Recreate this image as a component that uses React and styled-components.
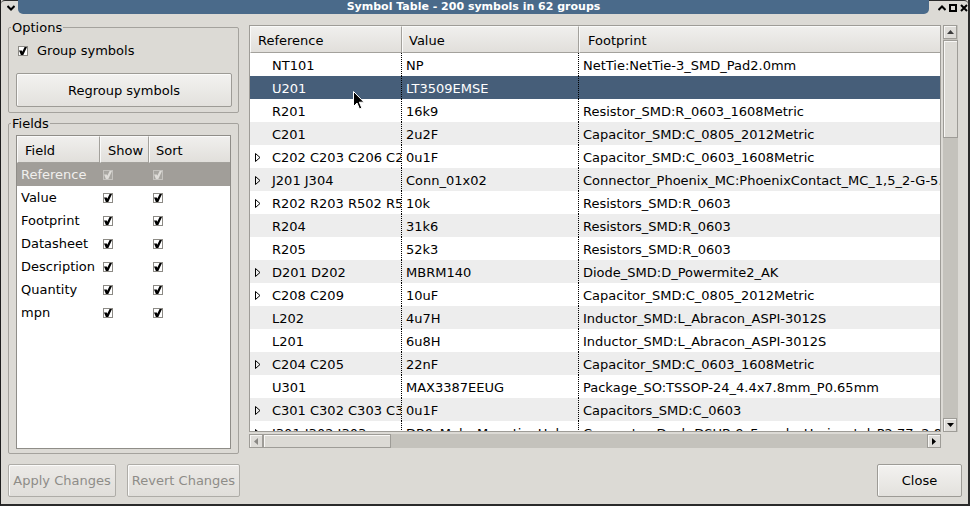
import styled, { createGlobalStyle } from "styled-components";

const GlobalStyle = createGlobalStyle`
  html, body {
    margin: 0;
    padding: 0;
    background: #dcdad5;
  }
  body {
    font-family: "DejaVu Sans", "Liberation Sans", sans-serif;
    font-size: 13px;
    color: #000;
  }
  * {
    box-sizing: border-box;
  }
`;

const fields = [
  "Reference",
  "Value",
  "Footprint",
  "Datasheet",
  "Description",
  "Quantity",
  "mpn",
];

const rows = [
  { ref: "NT101", value: "NP", fp: "NetTie:NetTie-3_SMD_Pad2.0mm" },
  { ref: "U201", value: "LT3509EMSE", fp: "", selected: true },
  { ref: "R201", value: "16k9", fp: "Resistor_SMD:R_0603_1608Metric" },
  { ref: "C201", value: "2u2F", fp: "Capacitor_SMD:C_0805_2012Metric" },
  { ref: "C202 C203 C206 C207", group: true, value: "0u1F", fp: "Capacitor_SMD:C_0603_1608Metric" },
  {
    ref: "J201 J304",
    group: true,
    value: "Conn_01x02",
    fp: "Connector_Phoenix_MC:PhoenixContact_MC_1,5_2-G-5.08_1x02_P5.08mm_Horizontal",
  },
  { ref: "R202 R203 R502 R503", group: true, value: "10k", fp: "Resistors_SMD:R_0603" },
  { ref: "R204", value: "31k6", fp: "Resistors_SMD:R_0603" },
  { ref: "R205", value: "52k3", fp: "Resistors_SMD:R_0603" },
  { ref: "D201 D202", group: true, value: "MBRM140", fp: "Diode_SMD:D_Powermite2_AK" },
  { ref: "C208 C209", group: true, value: "10uF", fp: "Capacitor_SMD:C_0805_2012Metric" },
  { ref: "L202", value: "4u7H", fp: "Inductor_SMD:L_Abracon_ASPI-3012S" },
  { ref: "L201", value: "6u8H", fp: "Inductor_SMD:L_Abracon_ASPI-3012S" },
  { ref: "C204 C205", group: true, value: "22nF", fp: "Capacitor_SMD:C_0603_1608Metric" },
  { ref: "U301", value: "MAX3387EEUG", fp: "Package_SO:TSSOP-24_4.4x7.8mm_P0.65mm" },
  { ref: "C301 C302 C303 C304", group: true, value: "0u1F", fp: "Capacitors_SMD:C_0603" },
  {
    ref: "J301 J302 J303",
    group: true,
    value: "DB9_Male_MountingHoles",
    fp: "Connector_Dsub:DSUB-9_Female_Horizontal_P2.77x2.84mm_EdgePinOffset9.90mm_Housed",
  },
];

function CheckMark({ dim }) {
  return (
    <CheckBox $dim={dim}>
      <svg width="8" height="8" viewBox="0 0 8 8">
        <path d="M0 3.4 L2.8 3.4 L3.3 4.7 L5.6 0 L8 0 L4.3 8 L1.9 8 Z" fill={dim ? "#dedcd8" : "#000"} />
      </svg>
    </CheckBox>
  );
}

function TreeArrow() {
  return (
    <svg width="6" height="9" viewBox="0 0 6 9">
      <path d="M0.5 0.5 L5 4.5 L0.5 8.5 Z" fill="none" stroke="#000" strokeWidth="1" />
    </svg>
  );
}

function App() {
  return (
    <>
      <GlobalStyle />
      <Window>
        <TitleBar>
          <MenuTab>
            <svg width="8" height="6" viewBox="0 0 8 6">
              <path d="M0.5 1 L4 4.5 L7.5 1" fill="none" stroke="#000" strokeWidth="2" />
            </svg>
          </MenuTab>
          <TitleStrip>Symbol Table - 200 symbols in 62 groups</TitleStrip>
          <WinControls>
            <svg width="8" height="6" viewBox="0 0 8 6">
              <path d="M0.5 5 L4 1.5 L7.5 5" fill="none" stroke="#000" strokeWidth="2" />
            </svg>
            <svg width="8" height="8" viewBox="0 0 8 8">
              <rect x="1" y="1" width="6" height="6" fill="none" stroke="#000" strokeWidth="2" />
            </svg>
            <svg width="8" height="8" viewBox="0 0 8 8">
              <path d="M1 1 L7 7 M7 1 L1 7" stroke="#000" strokeWidth="2" />
            </svg>
          </WinControls>
        </TitleBar>

        <Body>
          <Main>
            <LeftPane>
              <GroupBox $height="93px">
                <Legend>Options</Legend>
                <OptionsBody>
                  <CheckRow>
                    <CheckMark />
                    <span>Group symbols</span>
                  </CheckRow>
                  <Button $height="34px">Regroup symbols</Button>
                </OptionsBody>
              </GroupBox>

              <GroupBox $grow>
                <Legend>Fields</Legend>
                <FieldsBody>
                  <FieldsTable>
                    <FieldsHeader>
                      <HeaderCell $pad="7px">Field</HeaderCell>
                      <HeaderCell $pad="7px">Show</HeaderCell>
                      <HeaderCell $pad="6px" $last>Sort</HeaderCell>
                    </FieldsHeader>
                    {fields.map((name, i) => (
                      <FieldRow key={name} $selected={i === 0}>
                        <FieldCell>{name}</FieldCell>
                        <FieldCell $pad="3px">
                          <CheckMark dim={i === 0} />
                        </FieldCell>
                        <FieldCell $pad="4px">
                          <CheckMark dim={i === 0} />
                        </FieldCell>
                      </FieldRow>
                    ))}
                  </FieldsTable>
                </FieldsBody>
              </GroupBox>
            </LeftPane>

            <RightPane>
              <TableFrame>
                <TableHeader>
                  <HeaderCell $pad="7px">Reference</HeaderCell>
                  <HeaderCell $pad="6px">Value</HeaderCell>
                  <HeaderCell $pad="8px" $last>Footprint</HeaderCell>
                </TableHeader>
                {rows.map((r, i) => (
                  <DataRow key={r.ref} $alt={i % 2 === 1} $selected={r.selected}>
                    <RefCell>
                      <ArrowSlot>{r.group && <TreeArrow />}</ArrowSlot>
                      {r.ref}
                    </RefCell>
                    <DataCell $dotted>{r.value}</DataCell>
                    <DataCell>{r.fp}</DataCell>
                  </DataRow>
                ))}
                <Cursor width="12" height="19" viewBox="0 0 12 19">
                  <path
                    d="M0.5 0.5 L0.5 15.5 L4 12 L6.5 18 L8.8 17 L6.3 11.2 L11 11.2 Z"
                    fill="#000"
                    stroke="#fff"
                    strokeWidth="1"
                  />
                </Cursor>
              </TableFrame>

              <VScroll>
                <ScrollButton>
                  <svg width="7" height="4" viewBox="0 0 7 4">
                    <path d="M0 4 L3.5 0 L7 4 Z" fill="#3c3c3c" />
                  </svg>
                </ScrollButton>
                <VThumb />
                <Trough />
                <ScrollButton>
                  <svg width="7" height="4" viewBox="0 0 7 4">
                    <path d="M0 0 L3.5 4 L7 0 Z" fill="#000" />
                  </svg>
                </ScrollButton>
              </VScroll>

              <HScroll>
                <ScrollButton>
                  <svg width="4" height="7" viewBox="0 0 4 7">
                    <path d="M4 0 L0 3.5 L4 7 Z" fill="#8a8884" />
                  </svg>
                </ScrollButton>
                <HThumb />
                <Trough />
                <ScrollButton>
                  <svg width="4" height="7" viewBox="0 0 4 7">
                    <path d="M0 0 L4 3.5 L0 7 Z" fill="#000" />
                  </svg>
                </ScrollButton>
              </HScroll>
            </RightPane>
          </Main>

          <ButtonRow>
            <Button $width="108px" disabled>
              Apply Changes
            </Button>
            <Button $width="113px" disabled>
              Revert Changes
            </Button>
            <Spacer />
            <Button $width="85px">Close</Button>
          </ButtonRow>
        </Body>
      </Window>
    </>
  );
}

const Window = styled.div`
  width: 970px;
  height: 506px;
  display: flex;
  flex-direction: column;
  background: #dcdad5;
  border-left: 1px solid #1e1e1e;
  border-right: 2px solid #2a2a2a;
  border-bottom: 2px solid #2a2a2a;
  overflow: hidden;
`;

const TitleBar = styled.div`
  height: 15px;
  display: flex;
  flex-shrink: 0;
`;

const MenuTab = styled.div`
  width: 17px;
  display: flex;
  align-items: center;
  justify-content: center;
  padding-left: 3px;
  padding-bottom: 1px;
  border-top: 1px solid #2b2b2b;
  border-top-left-radius: 4px;
`;

const TitleStrip = styled.div`
  flex: 1;
  height: 14px;
  background: #4a6a8a;
  border-radius: 0 0 5px 5px;
  color: #fff;
  font-weight: bold;
  font-size: 11px;
  line-height: 14px;
  text-align: center;
`;

const WinControls = styled.div`
  width: 39px;
  display: flex;
  align-items: center;
  gap: 3px;
  padding-left: 9px;
  padding-bottom: 1px;
  border-top: 1px solid #2b2b2b;
  border-top-right-radius: 4px;
`;

const Body = styled.div`
  flex: 1;
  display: flex;
  flex-direction: column;
  padding: 5px 6px 7px 7px;
`;

const Main = styled.div`
  height: 434px;
  display: flex;
  gap: 10px;
`;

const LeftPane = styled.div`
  width: 231px;
  display: flex;
  flex-direction: column;
  gap: 3px;
`;

const GroupBox = styled.fieldset`
  margin: 0;
  padding: 0;
  min-width: 0;
  border: 1px solid #a4a29d;
  border-radius: 2px;
  display: flex;
  flex-direction: column;
  height: ${(p) => p.$height || "auto"};
  flex: ${(p) => (p.$grow ? "1" : "none")};
`;

const Legend = styled.legend`
  margin-left: 2px;
  padding: 0 1px;
  line-height: 15px;
  font-size: 13px;
`;

const OptionsBody = styled.div`
  display: flex;
  flex-direction: column;
  gap: 15px;
  padding: 8px 6px 0 7px;
`;

const CheckRow = styled.div`
  height: 15px;
  display: flex;
  align-items: center;
  gap: 9px;
  padding-left: 2px;
`;

const CheckBox = styled.span`
  width: 10px;
  height: 10px;
  display: inline-flex;
  align-items: center;
  justify-content: center;
  border: 1px solid ${(p) => (p.$dim ? "#c4c2be" : "#8c8a85")};
  background: ${(p) => (p.$dim ? "#a8a6a1" : "#fff")};
  flex-shrink: 0;
`;

const Button = styled.button`
  width: ${(p) => p.$width || "100%"};
  height: ${(p) => p.$height || "33px"};
  font-family: "DejaVu Sans", "Liberation Sans", sans-serif;
  font-size: 13px;
  color: #000;
  background: linear-gradient(#f3f2f0, #e3e1dd);
  border: 1px solid #9d9b96;
  border-radius: 2px;
  box-shadow: inset 1px 1px 0 #fbfbfa;
  padding: 0;

  &:disabled {
    color: #8e8c88;
    background: linear-gradient(#eceae7, #e0deda);
    border-color: #aeaca7;
  }
`;

const FieldsBody = styled.div`
  flex: 1;
  min-height: 0;
  display: flex;
  padding: 4px 7px 4px 7px;
`;

const FieldsTable = styled.div`
  flex: 1;
  background: #fff;
  border: 1px solid #8f8d88;
`;

const FieldsHeader = styled.div`
  display: grid;
  grid-template-columns: 83px 49px 1fr;
  height: 27px;
`;

const HeaderCell = styled.div`
  display: flex;
  align-items: center;
  padding-left: ${(p) => p.$pad};
  padding-top: 1px;
  background: linear-gradient(#f0efed, #e1dfdb);
  border-top: 1px solid #fafaf9;
  border-left: 1px solid #fafaf9;
  border-bottom: 1px solid #a3a19c;
  border-right: ${(p) => (p.$last ? "none" : "1px solid #a3a19c")};
  white-space: nowrap;
  overflow: hidden;
`;

const FieldRow = styled.div`
  display: grid;
  grid-template-columns: 83px 49px 1fr;
  height: 23px;
  background: ${(p) => (p.$selected ? "#a19e99" : "#fff")};
  color: ${(p) => (p.$selected ? "#f0efed" : "#000")};
`;

const FieldCell = styled.div`
  display: flex;
  align-items: center;
  padding-left: ${(p) => p.$pad || "4px"};
  white-space: nowrap;
`;

const RightPane = styled.div`
  margin-top: 5px;
  display: grid;
  grid-template-columns: 692px 15px;
  grid-template-rows: 407px 14px;
  column-gap: 2px;
  row-gap: 2px;
`;

const TableFrame = styled.div`
  position: relative;
  border: 1px solid #9e9c97;
  background: #fff;
  overflow: hidden;
`;

const TableHeader = styled.div`
  display: grid;
  grid-template-columns: 152px 177px 1fr;
  height: 27px;
`;

const DataRow = styled.div`
  display: grid;
  grid-template-columns: 152px 177px 1fr;
  height: 23px;
  background: ${(p) => (p.$selected ? "#465e79" : p.$alt ? "#ededed" : "#fff")};
  color: ${(p) => (p.$selected ? "#fff" : "#000")};
`;

const DataCell = styled.div`
  display: flex;
  align-items: center;
  padding-left: 4px;
  padding-top: 1px;
  white-space: nowrap;
  overflow: hidden;
  border-right: ${(p) => (p.$dotted ? "1px dotted #000" : "none")};
`;

const RefCell = styled(DataCell).attrs({ $dotted: true })`
  padding-left: 5px;
`;

const ArrowSlot = styled.span`
  width: 17px;
  flex-shrink: 0;
  display: inline-flex;
  align-items: center;
`;

const Cursor = styled.svg`
  position: absolute;
  left: 103px;
  top: 65px;
`;

const VScroll = styled.div`
  display: flex;
  flex-direction: column;
  background: #c4c2bc;
`;

const HScroll = styled.div`
  display: flex;
  background: #c4c2bc;
`;

const ScrollButton = styled.div`
  width: 14px;
  height: 14px;
  flex-shrink: 0;
  display: flex;
  align-items: center;
  justify-content: center;
  background: #dedcd8;
  border: 1px solid #9e9c97;
  box-shadow: inset 1px 1px 0 #f6f5f3;
`;

const VThumb = styled.div`
  height: 98px;
  margin-top: 1px;
  background: #dcdad5;
  border: 1px solid #9e9c97;
  box-shadow: inset 1px 1px 0 #f8f7f5;
`;

const HThumb = styled.div`
  width: 128px;
  background: #dcdad5;
  border: 1px solid #9e9c97;
  box-shadow: inset 1px 1px 0 #f8f7f5;
`;

const Trough = styled.div`
  flex: 1;
`;

const ButtonRow = styled.div`
  margin-top: 10px;
  display: flex;
  gap: 11px;
  height: 33px;
`;

const Spacer = styled.div`
  flex: 1;
`;

export default App;
